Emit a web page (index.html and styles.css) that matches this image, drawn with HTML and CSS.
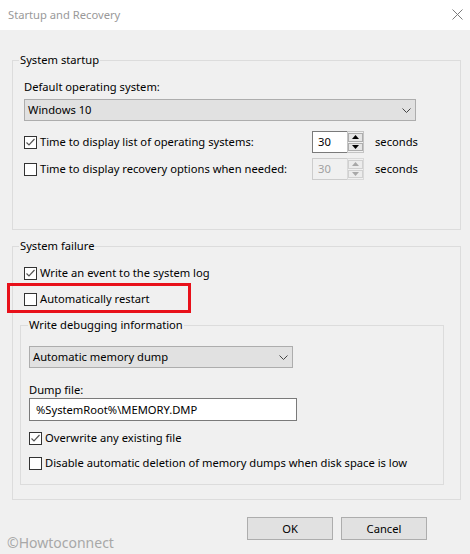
FILE: index.html
```html
<!DOCTYPE html>
<html lang="en">
<head>
<meta charset="utf-8">
<title>Startup and Recovery</title>
<link rel="stylesheet" href="styles.css">
</head>
<body>
<div class="window">
  <div class="titlebar">
    <span class="title">Startup and Recovery</span>
    <svg class="close" width="11" height="11" viewBox="0 0 11 11"><path d="M0.5 0.5 L10.5 10.5 M10.5 0.5 L0.5 10.5" stroke="#7b7b7b" stroke-width="1" fill="none"/></svg>
  </div>
  <div class="content">
    <fieldset class="group g1">
      <legend>System startup</legend>
      <div class="label">Default operating system:</div>
      <div class="select os-select">
        <span>Windows 10</span>
        <svg class="chev" width="9" height="5" viewBox="0 0 9 5"><path d="M0.5 0.5 L4.5 4.5 L8.5 0.5" stroke="#444" stroke-width="1" fill="none"/></svg>
      </div>
      <div class="timerow first">
        <div class="check-line">
          <span class="cb"><svg width="11" height="11" viewBox="0 0 11 11"><path d="M1.5 5.5 L4 8 L9.5 2" stroke="#555" stroke-width="1.2" fill="none"/></svg></span>
          <span>Time to display list of operating systems:</span>
        </div>
        <div class="spin">
          <div class="spin-field">30</div>
          <div class="spin-btns">
            <span class="sb"><svg width="7" height="4" viewBox="0 0 7 4"><path d="M3.5 0 L7 4 L0 4 Z" fill="#000"/></svg></span>
            <span class="sb"><svg width="7" height="4" viewBox="0 0 7 4"><path d="M0 0 L7 0 L3.5 4 Z" fill="#000"/></svg></span>
          </div>
        </div>
        <span class="unit">seconds</span>
      </div>
      <div class="timerow second">
        <div class="check-line">
          <span class="cb"></span>
          <span>Time to display recovery options when needed:</span>
        </div>
        <div class="spin disabled">
          <div class="spin-field">30</div>
          <div class="spin-btns">
            <span class="sb"><svg width="7" height="4" viewBox="0 0 7 4"><path d="M3.5 0 L7 4 L0 4 Z" fill="#a8a8a8"/></svg></span>
            <span class="sb"><svg width="7" height="4" viewBox="0 0 7 4"><path d="M0 0 L7 0 L3.5 4 Z" fill="#a8a8a8"/></svg></span>
          </div>
        </div>
        <span class="unit">seconds</span>
      </div>
    </fieldset>

    <fieldset class="group g2">
      <legend>System failure</legend>
      <div class="check-line indent">
        <span class="cb"><svg width="11" height="11" viewBox="0 0 11 11"><path d="M1.5 5.5 L4 8 L9.5 2" stroke="#555" stroke-width="1.2" fill="none"/></svg></span>
        <span>Write an event to the system log</span>
      </div>
      <div class="check-line indent restart">
        <span class="cb"></span>
        <span>Automatically restart</span>
        <span class="highlight"></span>
      </div>
      <fieldset class="group sub">
        <legend>Write debugging information</legend>
        <div class="select dump-select">
          <span>Automatic memory dump</span>
          <svg class="chev" width="9" height="5" viewBox="0 0 9 5"><path d="M0.5 0.5 L4.5 4.5 L8.5 0.5" stroke="#444" stroke-width="1" fill="none"/></svg>
        </div>
        <div class="label dump-label">Dump file:</div>
        <div class="textbox">%SystemRoot%\MEMORY.DMP</div>
        <div class="check-line overwrite">
          <span class="cb"><svg width="11" height="11" viewBox="0 0 11 11"><path d="M1.5 5.5 L4 8 L9.5 2" stroke="#555" stroke-width="1.2" fill="none"/></svg></span>
          <span>Overwrite any existing file</span>
        </div>
        <div class="check-line disable">
          <span class="cb"></span>
          <span>Disable automatic deletion of memory dumps when disk space is low</span>
        </div>
      </fieldset>
    </fieldset>

    <div class="buttons">
      <div class="btn">OK</div>
      <div class="btn">Cancel</div>
    </div>
  </div>
  <div class="watermark">©Howtoconnect</div>
</div>
</body>
</html>
```

FILE: styles.css
```css
* { box-sizing: border-box; }
html, body { margin: 0; padding: 0; }
body {
  background: #f0f0f0;
  font-family: "Noto Sans", "Open Sans", sans-serif;
  font-size: 11.2px;
  line-height: 16px;
  color: #000;
}
.window {
  position: relative;
  width: 470px;
  height: 554px;
  overflow: hidden;
  background: #f0f0f0;
}
.titlebar {
  height: 30px;
  background: #fff;
  display: flex;
  align-items: center;
  justify-content: space-between;
  padding: 0 7px 1px 8px;
}
.title { color: #999; }
.close { display: block; margin-top: -1px; }
.content {
  padding: 22px 9px 0 12px;
}
.group {
  margin: 0;
  border: 1px solid #dcdcdc;
  min-width: 0;
}
.group legend {
  padding: 0 1px;
  line-height: 16px;
}
.g1 { padding: 11px 11px 49px 11px; }
.g1 legend { margin-left: -5px; }
.g2 { margin-top: 8px; padding: 11px 16px 14px 7px; }
.g2 legend { margin-left: -1px; }
.sub { margin-top: 10px; padding: 13px 8px 13px 8px; }
.sub legend { margin-left: -1px; }

.label { line-height: 16px; }
.select {
  height: 22px;
  background: #e1e1e1;
  border: 1px solid #adadad;
  display: flex;
  align-items: center;
  justify-content: space-between;
  padding: 0 4px 0 3px;
}
.os-select { margin-top: 4px; width: 392px; }
.dump-select { width: 264px; }
.chev { display: block; }

.timerow {
  display: grid;
  grid-template-columns: 288px 52px auto;
  align-items: center;
  height: 22px;
  white-space: nowrap;
}
.timerow.first { margin-top: 10px; }
.timerow.second { margin-top: 5px; }
.unit { margin-left: 11px; }

.check-line {
  display: flex;
  align-items: center;
  height: 16px;
  white-space: nowrap;
}
.cb {
  width: 13px;
  height: 13px;
  border: 1px solid #333;
  background: #fff;
  margin-right: 3px;
  flex: none;
  display: flex;
}
.cb svg { display: block; }
.indent { margin-left: 4px; }
.restart { position: relative; margin-top: 10px; }
.highlight {
  position: absolute;
  left: -17px;
  top: -8px;
  width: 184px;
  height: 30px;
  border: 3px solid #e8101a;
}

.spin { display: flex; width: 52px; height: 22px; }
.spin-field {
  flex: 1;
  background: #fff;
  border: 1px solid #7a7a7a;
  border-right: 0;
  padding-left: 5px;
  line-height: 20px;
}
.spin-btns {
  width: 17px;
  border: 1px solid #c4c4c4;
  background: #f0f0f0;
  display: flex;
  flex-direction: column;
  padding: 1px 0;
  gap: 1px;
}
.sb {
  flex: 1;
  border: 1px solid #adadad;
  background: #e5e5e5;
  display: flex;
  align-items: center;
  justify-content: center;
}
.sb svg { display: block; }
.spin.disabled .spin-field { background: #f0f0f0; border-color: #cccccc; color: #a0a0a0; }
.spin.disabled .spin-btns { border-color: #d9d9d9; }
.spin.disabled .sb { border-color: #d0d0d0; background: #ececec; }

.dump-label { margin-top: 14px; }
.textbox {
  width: 268px;
  height: 23px;
  background: #fff;
  border: 1px solid #7a7a7a;
  padding-left: 6px;
  line-height: 21px;
}
.overwrite { margin-top: 9px; }
.disable { margin-top: 9px; }

.buttons {
  display: flex;
  justify-content: flex-end;
  gap: 8px;
  margin-top: 17px;
  margin-right: 34px;
}
.btn {
  width: 86px;
  height: 23px;
  background: #e1e1e1;
  border: 1px solid #adadad;
  text-align: center;
  line-height: 21px;
}
.watermark {
  position: absolute;
  left: 7px;
  top: 535px;
  font-size: 14px;
  line-height: 16px;
  color: #a8a8a8;
}
```
